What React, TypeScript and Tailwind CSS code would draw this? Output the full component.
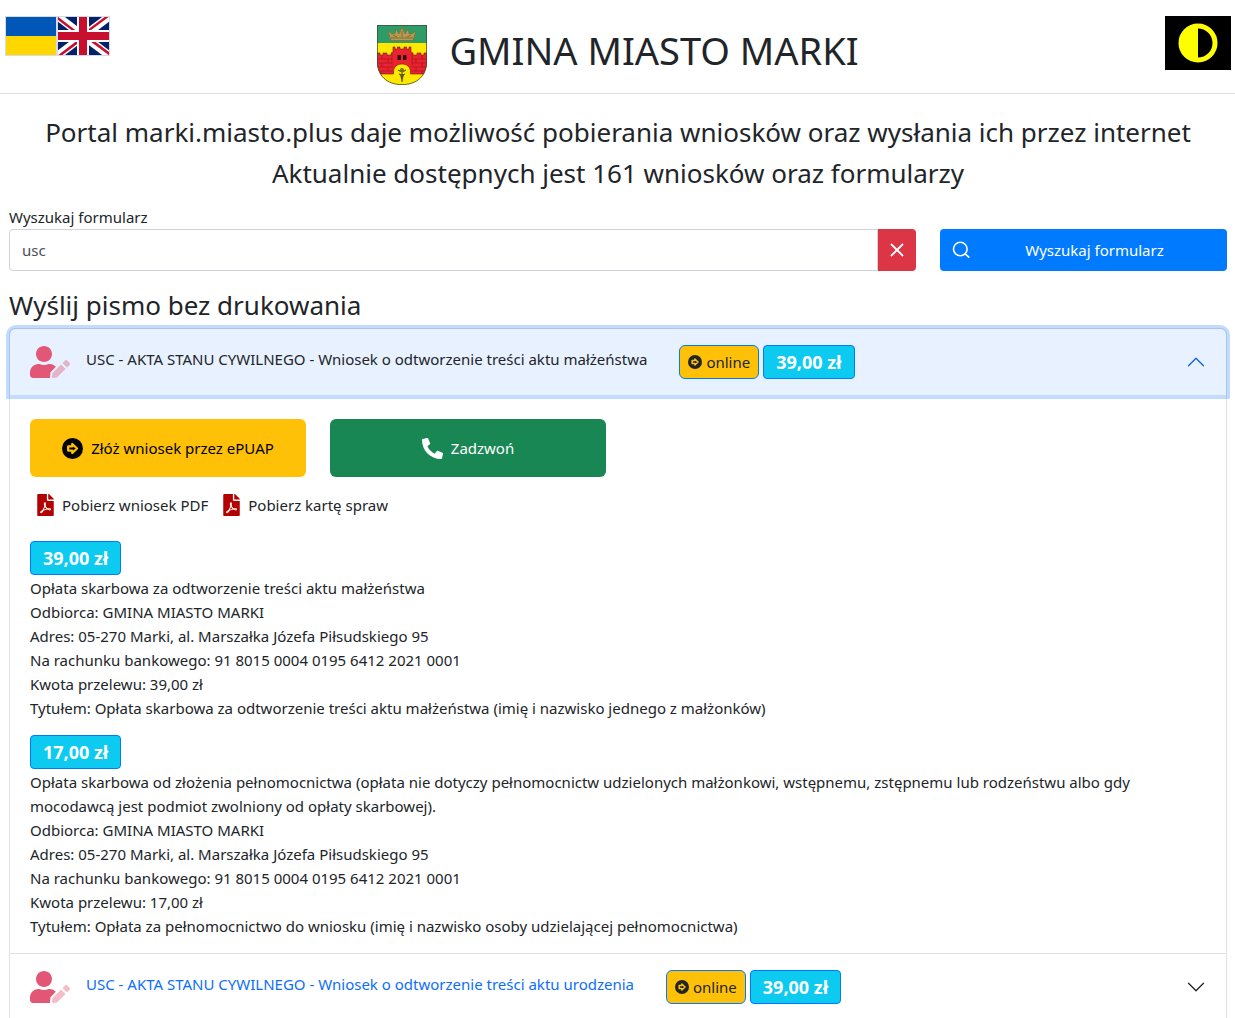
import { useState } from "react";
import { FaFilePdf, FaPhoneAlt } from "react-icons/fa";
import { BsChevronDown } from "react-icons/bs";

const RECIPIENT = [
  "Odbiorca: GMINA MIASTO MARKI",
  "Adres: 05-270 Marki, al. Marszałka Józefa Piłsudskiego 95",
  "Na rachunku bankowego: 91 8015 0004 0195 6412 2021 0001",
];

const FEES = [
  {
    amount: "39,00 zł",
    title: "Opłata skarbowa za odtworzenie treści aktu małżeństwa",
    subject: "Opłata skarbowa za odtworzenie treści aktu małżeństwa (imię i nazwisko jednego z małżonków)",
  },
  {
    amount: "17,00 zł",
    title:
      "Opłata skarbowa od złożenia pełnomocnictwa (opłata nie dotyczy pełnomocnictw udzielonych małżonkowi, wstępnemu, zstępnemu lub rodzeństwu albo gdy mocodawcą jest podmiot zwolniony od opłaty skarbowej).",
    subject: "Opłata za pełnomocnictwo do wniosku (imię i nazwisko osoby udzielającej pełnomocnictwa)",
  },
];

function FlagUkraine() {
  return (
    <svg viewBox="0 0 52 40" className="h-10 w-[52px]" aria-hidden="true">
      <rect width="52" height="40" fill="#d8dbe2" />
      <rect x="1" y="1" width="50" height="19" fill="#0057b8" />
      <rect x="1" y="20" width="50" height="19" fill="#ffd700" />
    </svg>
  );
}

function FlagUk() {
  return (
    <svg viewBox="0 0 53 40" className="h-10 w-[53px]" aria-hidden="true">
      <defs>
        <clipPath id="uk-frame">
          <rect x="1" y="1" width="51" height="38" />
        </clipPath>
        <clipPath id="uk-saltire">
          <path d="M26 20H53V40zM26 20V40H0zM26 20H0V0zM26 20V0H53z" />
        </clipPath>
      </defs>
      <rect width="53" height="40" fill="#d5d8e6" />
      <g clipPath="url(#uk-frame)">
        <rect width="53" height="40" fill="#012169" />
        <path d="M0 0L53 40M53 0L0 40" stroke="#fff" strokeWidth="8" />
        <path d="M0 0L53 40M53 0L0 40" stroke="#c8102e" strokeWidth="5" clipPath="url(#uk-saltire)" />
        <path d="M26 0V40M0 20H53" stroke="#fff" strokeWidth="12" />
        <path d="M26 0V40M0 20H53" stroke="#c8102e" strokeWidth="8" />
      </g>
    </svg>
  );
}

function Crest() {
  return (
    <svg viewBox="0 0 50 60" className="h-[60px] w-[50px]" role="img" aria-label="Herb Marek">
      <defs>
        <clipPath id="crest-shield">
          <path d="M0 0H50V36C50 51 40 60 25 60S0 51 0 36z" />
        </clipPath>
      </defs>
      <g clipPath="url(#crest-shield)">
        <rect width="50" height="60" fill="#ffe800" />
        <rect width="50" height="18" fill="#2f9c68" />
        {/* castle wall with two towers */}
        <path
          d="M0 28H3V30H6V28H10V30H14V28L16 27V22H18V24H20.500V22H23V24H27V22H29.500V24H32V22H34V27L36 28V30H40V28H44V30H47V28H50V49H33.500V47C33.500 42 30 39 25 39S16.500 42 16.500 47V49H0z"
          fill="#ea2330"
          stroke="#6d1a1a"
          strokeWidth="0.6"
        />
        <path
          d="M0 34H15M35 34H50M0 38H15M35 38H50M0 42H16M34 42H50M0 46H16M34 46H50M5 31V34M11 34V38M5 38V42M11 42V46M5 46V49M45 31V34M39 34V38M45 38V42M39 42V46M45 46V49M15 28V40M35 28V40"
          stroke="#9d1620"
          strokeWidth="0.6"
          fill="none"
        />
        <rect x="20.500" y="30" width="3.500" height="5" fill="#301010" />
        <rect x="26" y="30" width="3.500" height="5" fill="#301010" />
        {/* caduceus in the gate */}
        <path d="M25 43V57M21 45L25 47L29 45M22 49C28 51 22 53 26 55M28 49C22 51 28 53 24 55" stroke="#5b5a12" strokeWidth="1.2" fill="none" />
        <circle cx="25" cy="45" r="2" fill="#77751a" />
        <path d="M23 49H27L26 54H24z" fill="#5b5a12" />
      </g>
      {/* crown */}
      <path
        d="M14 15.500L11 6L15 9L18 8.500L19 4L22 9L25 2L28 9L31 4L32 8.500L35 9L39 6L36 15.500z"
        fill="#b79a52"
        stroke="#7a6a30"
        strokeWidth="0.6"
      />
      <path d="M14 13H36M16 10L20 12M34 10L30 12M25 6V12" stroke="#6b5a2a" strokeWidth="0.7" />
      <path
        d="M0.400 0.400H49.600V36C49.600 51 40 59.600 25 59.600S0.400 51 0.400 36z"
        fill="none"
        stroke="#3c4a33"
        strokeWidth="0.8"
      />
    </svg>
  );
}

function UserEditIcon() {
  return (
    <svg viewBox="0 0 640 512" className="h-8 w-10 shrink-0" fill="#e35776" aria-hidden="true">
      <path d="M224 256c70.700 0 128-57.300 128-128S294.700 0 224 0 96 57.300 96 128s57.300 128 128 128zm89.600 32h-16.700c-22.200 10.200-46.900 16-72.900 16s-50.600-5.800-72.900-16h-16.700C60.200 288 0 348.200 0 422.400V464c0 26.500 21.500 48 48 48h274.900c-2.400-6.800-3.400-14-2.600-21.300l6.800-60.900 1.200-11.100 7.900-7.900 77.300-77.300c-24.500-27.700-60-45.500-99.900-45.500z" />
      <path
        opacity="0.4"
        d="M358.900 433.300l-6.800 61c-1.100 10.200 7.500 18.800 17.600 17.600l60.900-6.800 137.900-137.900-71.700-71.700-137.900 137.800zM633 268.900L595.100 231c-9.300-9.300-24.500-9.300-33.800 0l-37.800 37.800-4.100 4.100 71.800 71.700 41.800-41.800c9.300-9.400 9.300-24.500 0-33.900z"
      />
    </svg>
  );
}

function ArrowCircleIcon({ className }: { className: string }) {
  return (
    <svg viewBox="0 0 21 21" className={className} aria-hidden="true">
      <circle cx="10.500" cy="10.500" r="10.500" fill="currentColor" />
      <path
        d="M6.200 8.400H10.300V6L15 10.500L10.300 15V12.600H6.200z"
        fill="none"
        stroke="#ffc107"
        strokeWidth="2.3"
        strokeLinejoin="round"
      />
    </svg>
  );
}

function Price({ children }: { children: string }) {
  return (
    <span className="inline-flex h-[34px] items-center rounded border border-[#007bff] bg-[#0dcaf0] px-3 text-lg leading-6 font-bold text-white">
      {children}
    </span>
  );
}

type FormHeaderProps = {
  title: string;
  price: string;
  open: boolean;
  onToggle: () => void;
};

function FormHeader({ title, price, open, onToggle }: FormHeaderProps) {
  return (
    <h3>
      <button
        type="button"
        aria-expanded={open}
        onClick={onToggle}
        className={
          open
            ? "flex w-full items-center rounded-t-md bg-[#e7f1ff] px-5 py-4 text-left text-[#212529] shadow-[0_0_0_4px_rgba(13,110,253,0.25)]"
            : "flex w-full items-center bg-white px-5 py-4 text-left text-[#0d6efd]"
        }
      >
        <UserEditIcon />
        <span className="mb-[6px] ml-4">{title}</span>
        <span className="ml-8 flex gap-1">
          <span className="inline-flex h-[34px] items-center gap-1 rounded-md border border-[#007bff] bg-[#ffc107] px-2 text-[#212529]">
            <ArrowCircleIcon className="size-[14px]" />
            online
          </span>
          <Price>{price}</Price>
        </span>
        <BsChevronDown
          className={open ? "ml-auto size-5 rotate-180 text-[#0c63e4]" : "ml-auto size-5 text-[#212529]"}
        />
      </button>
    </h3>
  );
}

export default function App() {
  const [query, setQuery] = useState("usc");
  const [open, setOpen] = useState(0);

  return (
    <div className="h-screen overflow-hidden bg-white font-['Noto_Sans',sans-serif] text-[15px] leading-6 text-[#212529]">
      <header className="flex items-start justify-between border-b border-[#dee2e6] px-1 pt-4 pb-2">
        <div className="flex flex-1 pl-px">
          <button type="button" aria-label="Українська">
            <FlagUkraine />
          </button>
          <button type="button" aria-label="English">
            <FlagUk />
          </button>
        </div>
        <div className="flex items-start gap-[22px] pt-[9px]">
          <Crest />
          <h1 className="text-[38px] leading-[50px]">GMINA MIASTO MARKI</h1>
        </div>
        <div className="flex flex-1 justify-end">
          <button
            type="button"
            aria-label="Kontrast"
            className="flex h-[54px] w-[66px] items-center justify-center bg-black"
          >
            <svg viewBox="0 0 40 40" className="size-10" aria-hidden="true">
              <circle cx="20" cy="20" r="17" fill="none" stroke="#ff0" strokeWidth="5" />
              <path d="M20 2A18 18 0 0 0 20 38z" fill="#ff0" />
            </svg>
          </button>
        </div>
      </header>

      <main className="pr-2 pl-[9px]">
        <p className="pt-[18px] text-center text-[26px] leading-[41px]">
          Portal marki.miasto.plus daje możliwość pobierania wniosków oraz wysłania ich przez internet
          <br />
          Aktualnie dostępnych jest 161 wniosków oraz formularzy
        </p>

        <form className="mt-[11px] flex items-end gap-6" onSubmit={(e) => e.preventDefault()}>
          <div className="flex-1">
            <label htmlFor="query" className="block">
              Wyszukaj formularz
            </label>
            <div className="flex h-[42px]">
              <input
                id="query"
                value={query}
                onChange={(e) => setQuery(e.target.value)}
                className="min-w-0 flex-1 rounded-l border border-[#ced4da] px-3 text-[#495057] outline-none"
              />
              <button
                type="button"
                aria-label="Wyczyść"
                onClick={() => setQuery("")}
                className="flex w-[38px] items-center justify-center rounded-r bg-[#dc3545] text-white"
              >
                <svg viewBox="0 0 14 14" className="size-[14px]" stroke="currentColor" strokeWidth="1.8" aria-hidden="true">
                  <path d="M1 1L13 13M13 1L1 13" />
                </svg>
              </button>
            </div>
          </div>
          <button type="submit" className="flex h-[42px] w-[287px] items-center rounded bg-[#007bff] px-3 text-white">
            <svg
              viewBox="0 0 18 18"
              className="size-[18px]"
              fill="none"
              stroke="currentColor"
              strokeWidth="1.6"
              strokeLinecap="round"
              aria-hidden="true"
            >
              <circle cx="8.300" cy="8" r="6.800" />
              <path d="M13.200 12.800L16.800 16.200" />
            </svg>
            <span className="flex-1 pl-1 text-center">Wyszukaj formularz</span>
          </button>
        </form>

        <h2 className="mt-4 mb-[5px] text-[26px] leading-9">Wyślij pismo bez drukowania</h2>

        <section className="rounded-t-md border border-[#dee2e6]">
          <FormHeader
            title="USC - AKTA STANU CYWILNEGO - Wniosek o odtworzenie treści aktu małżeństwa"
            price="39,00 zł"
            open={open === 0}
            onToggle={() => setOpen(open === 0 ? -1 : 0)}
          />
          {open === 0 && (
            <div className="px-5 pt-6 pb-[15px]">
              <div className="flex gap-6">
                <a
                  href="#epuap"
                  className="flex h-[58px] w-[276px] items-center justify-center gap-2 rounded-md bg-[#ffc107] text-black"
                >
                  <ArrowCircleIcon className="size-[21px]" />
                  Złóż wniosek przez ePUAP
                </a>
                <a
                  href="#phone"
                  className="flex h-[58px] w-[276px] items-center justify-center gap-2 rounded-md bg-[#198754] text-white"
                >
                  <FaPhoneAlt className="size-[21px]" />
                  Zadzwoń
                </a>
              </div>

              <div className="mt-4 flex gap-[15px] pl-[7px]">
                <a href="#pdf" className="flex items-center gap-2">
                  <FaFilePdf className="h-[22px] w-[17px] text-[#b30000]" />
                  Pobierz wniosek PDF
                </a>
                <a href="#card" className="flex items-center gap-2">
                  <FaFilePdf className="h-[22px] w-[17px] text-[#b30000]" />
                  Pobierz kartę spraw
                </a>
              </div>

              <div className="mt-6 space-y-[15px]">
                {FEES.map((fee) => (
                  <div key={fee.amount}>
                    <div className="flex pb-px">
                      <Price>{fee.amount}</Price>
                    </div>
                    <p>{fee.title}</p>
                    {RECIPIENT.map((line) => (
                      <p key={line}>{line}</p>
                    ))}
                    <p>Kwota przelewu: {fee.amount}</p>
                    <p>Tytułem: {fee.subject}</p>
                  </div>
                ))}
              </div>
            </div>
          )}
          <div className="border-t border-[#dee2e6]">
            <FormHeader
              title="USC - AKTA STANU CYWILNEGO - Wniosek o odtworzenie treści aktu urodzenia"
              price="39,00 zł"
              open={open === 1}
              onToggle={() => setOpen(open === 1 ? -1 : 1)}
            />
          </div>
        </section>
      </main>
    </div>
  );
}
